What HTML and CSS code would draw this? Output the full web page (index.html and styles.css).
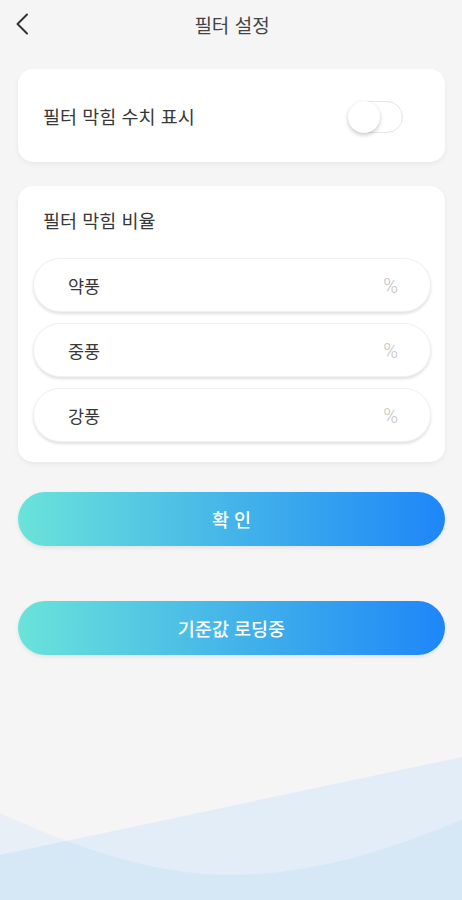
FILE: index.html
```html
<!DOCTYPE html>
<html lang="ko">
<head>
  <meta charset="UTF-8" />
  <meta name="viewport" content="width=device-width, initial-scale=1.0" />
  <title>필터 설정</title>
  <link rel="stylesheet" href="styles.css">
</head>
<body>
  <div class="page">
    <div class="header">
      <button type="button" class="back-btn">
        <svg width="14" height="22" viewBox="0 0 14 22"><polyline points="11,1.5 1.5,11 11,20.5" fill="none" stroke="#333" stroke-width="2" stroke-linecap="round" stroke-linejoin="round"/></svg>
      </button>
      <h1>필터 설정</h1>
    </div>

    <div class="card card-row">
      <span class="label">필터 막힘 수치 표시</span>
      <span class="switch"><span class="knob"></span></span>
    </div>

    <div class="card card-list">
      <p class="card-title">필터 막힘 비율</p>
      <div class="field">
        <span class="label">약풍</span>
        <span class="unit">%</span>
      </div>
      <div class="field">
        <span class="label">중풍</span>
        <span class="unit">%</span>
      </div>
      <div class="field">
        <span class="label">강풍</span>
        <span class="unit">%</span>
      </div>
    </div>

    <button type="button" class="main-btn">확 인</button>
    <button type="button" class="main-btn second">기준값 로딩중</button>
  </div>

  <svg class="waves" width="462" height="160" viewBox="0 0 462 160" preserveAspectRatio="none">
    <defs>
      <clipPath id="back">
        <path d="M0 115 L462 17 L462 160 L0 160 Z"/>
      </clipPath>
    </defs>
    <path d="M0 73 C70 105 150 135 230 135 C320 135 400 105 462 80 L462 160 L0 160 Z" fill="#e8eff6"/>
    <path d="M0 115 L462 17 L462 160 L0 160 Z" fill="#e2edf8"/>
    <path d="M0 73 C70 105 150 135 230 135 C320 135 400 105 462 80 L462 160 L0 160 Z" fill="#d6e7f5" clip-path="url(#back)"/>
  </svg>
</body>
</html>
```

FILE: styles.css
```css
html, body {
  margin: 0;
  padding: 0;
  height: 100%;
}
body {
  font-family: "Noto Sans CJK KR", "Noto Sans", sans-serif;
  background-color: #f5f5f5;
  color: #333;
  position: relative;
  overflow: hidden;
}
.page {
  position: relative;
  z-index: 1;
  padding: 0 17px 0 18px;
}
.header {
  height: 48px;
  display: flex;
  align-items: center;
  justify-content: center;
  position: relative;
}
.back-btn {
  position: absolute;
  left: -2px;
  top: 13px;
  padding: 0;
  border: none;
  background: none;
  line-height: 0;
}
.header h1 {
  margin: 0;
  font-size: 19px;
  font-weight: normal;
  color: #444;
  padding-left: 1px;
}
.card {
  background: #fff;
  border-radius: 15px;
  box-shadow: 0 2px 5px rgba(0, 0, 0, 0.06);
}
.card-row {
  margin-top: 21px;
  height: 93px;
  padding: 0 42px 0 25px;
  display: flex;
  align-items: center;
  justify-content: space-between;
}
.label {
  font-size: 18.5px;
  color: #383838;
}
.switch {
  width: 55px;
  height: 32px;
  box-sizing: border-box;
  border: 1px solid #e6e6e6;
  border-radius: 16px;
  background: #fff;
  position: relative;
  margin-top: 3px;
}
.knob {
  position: absolute;
  left: -1px;
  top: -1px;
  width: 32px;
  height: 32px;
  border-radius: 50%;
  background: #fff;
  box-shadow: 0 2px 4px rgba(0, 0, 0, 0.22);
}
.card-list {
  margin-top: 24px;
  padding: 21px 14px 20px 15px;
}
.card-title {
  margin: 0 0 25px 10px;
  font-size: 18.5px;
  line-height: 26px;
  color: #383838;
}
.field {
  height: 54px;
  box-sizing: border-box;
  border: 1px solid #f0f0f0;
  border-radius: 27px;
  background: #fff;
  box-shadow: 0 2px 3px rgba(0, 0, 0, 0.12);
  display: flex;
  align-items: center;
  justify-content: space-between;
  padding: 0 32px 0 34px;
  margin-bottom: 11px;
}
.field:last-child {
  margin-bottom: 0;
}
.field .label {
  font-size: 17.5px;
}
.unit {
  font-family: "Roboto", sans-serif;
  font-size: 20px;
  font-weight: 300;
  color: #c4c4c4;
  margin-top: 2px;
}
.main-btn {
  display: block;
  width: 100%;
  height: 54px;
  margin-top: 30px;
  border: none;
  border-radius: 27px;
  background: linear-gradient(to right, #6ae3da, #1e86f8);
  color: #fff;
  font-family: "Noto Sans CJK KR", "Noto Sans", sans-serif;
  font-size: 18.5px;
  font-weight: 500;
  box-shadow: 0 2px 4px rgba(0, 0, 0, 0.08);
}
.main-btn.second {
  margin-top: 55px;
}
.waves {
  position: absolute;
  left: 0;
  bottom: 0;
  width: 100%;
  height: 160px;
  display: block;
}
```
